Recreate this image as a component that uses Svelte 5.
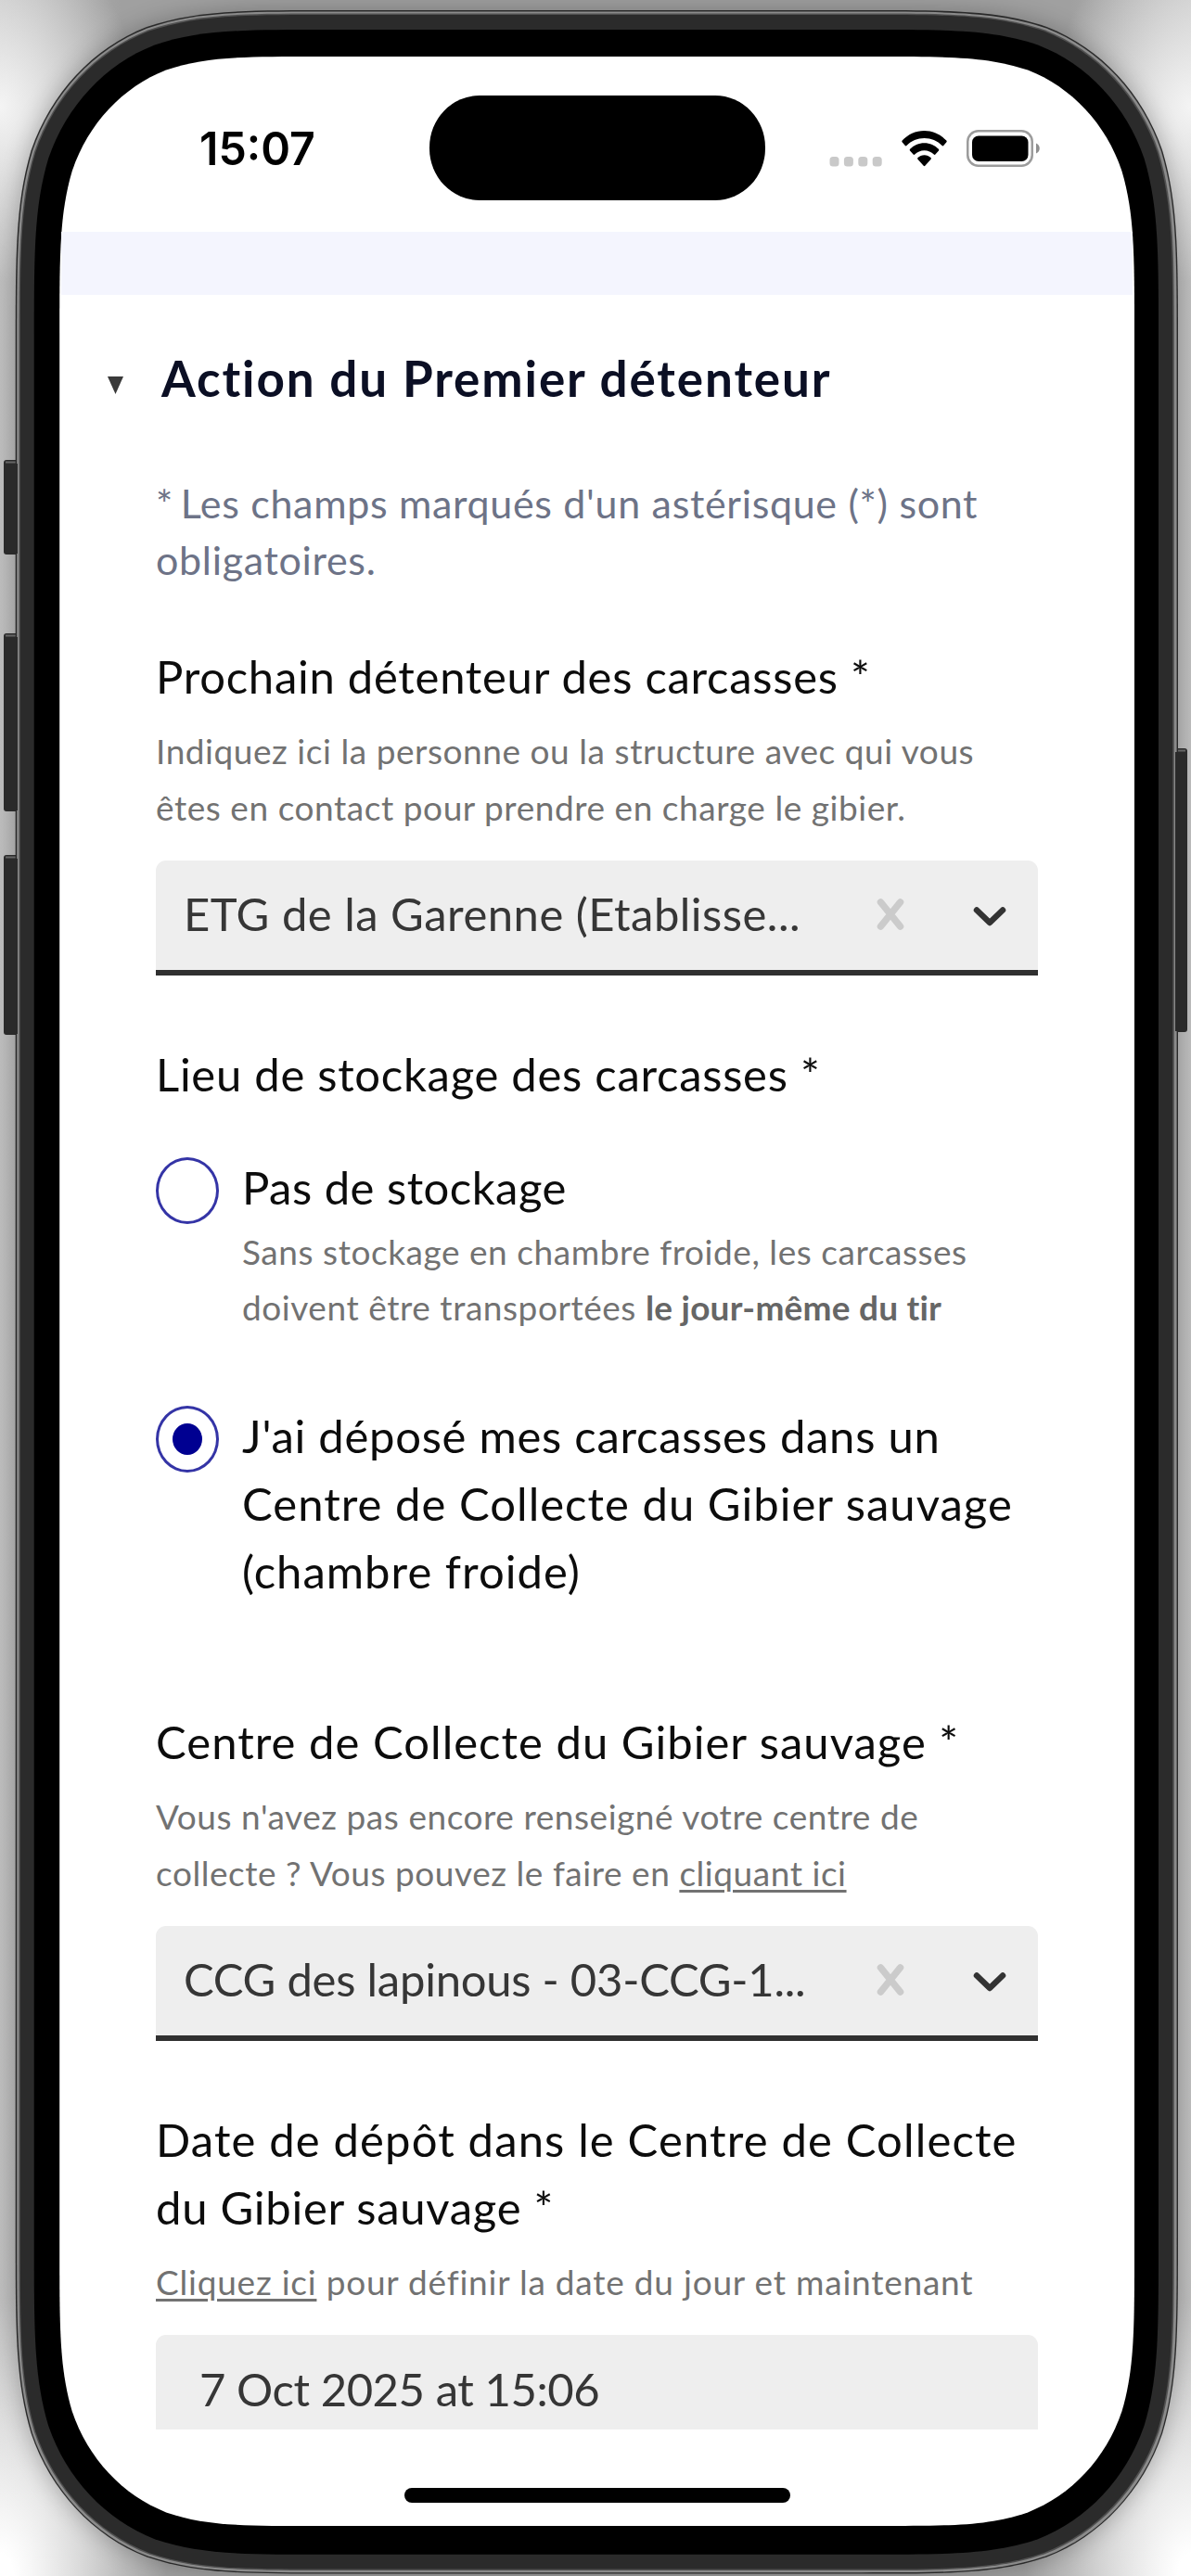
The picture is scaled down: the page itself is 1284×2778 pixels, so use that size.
<script>
  // Continuous-curvature rounded rectangle, used for each ring of the device.
  function squircle(x0, y0, x1, y1, rx, ry) {
    const corners = [
      [x0, y0, 1, 1, false],
      [x1, y0, -1, 1, true],
      [x1, y1, -1, -1, false],
      [x0, y1, 1, -1, true]
    ];
    const curve = [
      [0, 1.52866], [0, 1.08849], [0, 0.86841], [0.07491, 0.63149],
      [0.16906, 0.37282], [0.37282, 0.16906], [0.63149, 0.07491],
      [0.86841, 0], [1.08849, 0], [1.52866, 0]
    ];
    let d = '';
    corners.forEach(([cx, cy, sx, sy, flip], i) => {
      const pts = (flip ? [...curve].reverse() : curve).map(
        ([a, b]) => `${(cx + sx * a * rx).toFixed(2)} ${(cy + sy * b * ry).toFixed(2)}`
      );
      d += `${i ? 'L' : 'M'}${pts[0]}`;
      for (let k = 1; k < 10; k += 3) d += `C${pts[k]} ${pts[k + 1]} ${pts[k + 2]}`;
    });
    return d + 'Z';
  }

  const rings = [
    { fill: '#2a2a2a', d: squircle(16.7, 11, 1270, 2775.6, 224, 240) },
    { fill: '#8b8b8b', d: squircle(18.2, 12.6, 1268.6, 2774.2, 222.5, 238) },
    { fill: '#505050', d: squircle(20.5, 14.6, 1265.8, 2772, 221, 236) },
    { fill: '#2b2b2b', d: squircle(21.8, 16, 1264.2, 2770.6, 220, 235) },
    { fill: '#000', d: squircle(36.7, 32, 1249, 2754.8, 206, 220) },
    { fill: '#fff', d: squircle(64.2, 61, 1223, 2724, 182, 195) }
  ];

  const buttons = [
    { x: 4, y: 496, h: 102 },
    { x: 4, y: 683, h: 192 },
    { x: 4, y: 922, h: 194 },
    { x: 1264, y: 807, h: 306 }
  ];
</script>

{#snippet select(value, cls)}
  <div class="control">
    <span class="value {cls}">{value}</span>
    <svg class="clear" viewBox="0 0 30 36"><path d="M4.500 5L25.500 31M25.500 5L4.500 31" /></svg>
    <svg class="chevron" viewBox="0 0 36 24"><path d="M4 4.500L18 18L32 4.500" /></svg>
  </div>
{/snippet}

<div class="stage">
  <svg class="device" viewBox="0 0 1284 2778">
    <defs>
      <filter id="soft" x="-10%" y="-10%" width="120%" height="120%"><feGaussianBlur stdDeviation="13" /></filter>
    </defs>
    <path d={rings[0].d} fill="#000" opacity=".26" filter="url(#soft)" />
    {#each buttons as b}
      <rect x={b.x} y={b.y} width="16" height={b.h} rx="3" fill="#2a2a2a" />
      <rect x={b.x + 2} y={b.y + 1.5} width="12" height="2" fill="#666" />
    {/each}
    {#each rings as r}<path d={r.d} fill={r.fill} />{/each}
    {#each buttons as b}
      <rect x={b.x < 100 ? 10 : 1267} y={b.y + 4} width="9" height={b.h - 5} fill="#2a2a2a" />
    {/each}
  </svg>

  <main class="screen">
    <header class="status">
      <div class="time"><span>15:07</span></div>
      <div class="island"></div>
      <div class="icons">
        <svg class="dots" viewBox="0 0 56 40">
          <rect x="0" y="29" width="10" height="10.500" rx="3.500" />
          <rect x="15.400" y="29" width="10" height="10.500" rx="3.500" />
          <rect x="30.800" y="29" width="10" height="10.500" rx="3.500" />
          <rect x="46.200" y="29" width="10" height="10.500" rx="3.500" />
        </svg>
        <svg class="wifi" viewBox="0 0 49 40">
          <path d="M24.500 1C33.800 1 42.300 5 48.300 11.600C48.800 12.100 48.800 12.800 48.400 13.300L45.200 17C44.800 17.500 44.100 17.500 43.600 17C38.600 11.900 31.900 9 24.500 9S10.400 11.900 5.400 17C4.900 17.500 4.200 17.500 3.800 17L.6 13.300C.2 12.800 .2 12.100 .7 11.600C6.700 5 15.200 1 24.500 1Z" />
          <path d="M24.500 14.200C30.500 14.200 36 16.700 39.900 20.800C40.400 21.300 40.400 22 40 22.500L36.400 26.500C36 27 35.300 27 34.800 26.500C32.100 23.800 28.500 22.200 24.500 22.200S16.900 23.800 14.200 26.500C13.700 27 13 27 12.600 26.500L9 22.500C8.600 22 8.600 21.300 9.100 20.800C13 16.700 18.500 14.200 24.500 14.200Z" />
          <path d="M24.500 27.200C27.200 27.200 29.700 28.300 31.500 30.100C32 30.600 32 31.200 31.600 31.700L25.300 38.800C24.800 39.300 24.200 39.300 23.700 38.800L17.400 31.700C17 31.200 17 30.600 17.500 30.100C19.300 28.300 21.800 27.200 24.500 27.200Z" />
        </svg>
        <svg class="battery" viewBox="0 0 80 40">
          <rect x="1.250" y="1.250" width="69.500" height="37.500" rx="11.500" fill="none" stroke="#9c9c9c" stroke-width="2.500" />
          <rect x="6" y="6.500" width="60.500" height="27.500" rx="7" />
          <path d="M75 14.500C80 16.500 80 23.500 75 25.500Z" fill="#8f8f8f" />
        </svg>
      </div>
    </header>

    <div class="band"></div>

    <section class="form">
      <h2><svg class="marker" viewBox="0 0 17 19"><path d="M0 0H17L8.500 19Z" /></svg><span>Action du Premier détenteur</span></h2>

      <p class="note"><span class="star">*</span> Les champs marqués d'un astérisque (*) sont<br />obligatoires.</p>

      <div class="field next">
        <div class="label">Prochain détenteur des carcasses *</div>
        <p class="hint">Indiquez ici la personne ou la structure avec qui vous<br />êtes en contact pour prendre en charge le gibier.</p>
        {@render select('ETG de la Garenne (Etablisse...', 'snug')}
      </div>

      <div class="storage">
        <div class="label">Lieu de stockage des carcasses *</div>
        <div class="option">
          <span class="radio"></span>
          <div>
            <div class="label snug">Pas de stockage</div>
            <p class="hint">Sans stockage en chambre froide, les carcasses<br />doivent être transportées <b>le jour-même du tir</b></p>
          </div>
        </div>
        <div class="option">
          <span class="radio checked"></span>
          <div class="label">J'ai déposé mes carcasses dans un<br /><span class="wide">Centre de Collecte du Gibier sauvage<br />(chambre froide)</span></div>
        </div>
      </div>

      <div class="field centre">
        <div class="label wide">Centre de Collecte du Gibier sauvage *</div>
        <p class="hint">Vous n'avez pas encore renseigné votre centre de<br />collecte ? Vous pouvez le faire en <u>cliquant ici</u></p>
        {@render select('CCG des lapinous - 03-CCG-1...', 'code')}
      </div>

      <div class="field date">
        <div class="label"><span class="wider">Date de dépôt dans le Centre de Collecte</span><br />du Gibier sauvage *</div>
        <p class="hint loose"><u>Cliquez ici</u> pour définir la date du jour et maintenant</p>
        <div class="control input"><span class="value flat">7 Oct 2025 at 15:06</span></div>
      </div>
    </section>

    <div class="home"></div>
  </main>
</div>

<style>
  :global(body) { margin: 0; }
  .stage {
    position: relative;
    box-sizing: border-box;
    width: 1284px;
    height: 2778px;
    padding: 61px 61px 54px 64px;
    overflow: hidden;
    font-family: Lato, "Open Sans", sans-serif;
    background:
      radial-gradient(ellipse 150px 190px at 0 115px, #f4f4f4, #f4f4f400),
      radial-gradient(ellipse 150px 190px at 1284px 115px, #f4f4f4, #f4f4f400),
      radial-gradient(ellipse 180px 300px at 0 2778px, #fff 8%, #fff0),
      radial-gradient(ellipse 180px 300px at 1284px 2778px, #fff 8%, #fff0),
      linear-gradient(90deg, #c0c0c0, #a0a0a0 130px, #a0a0a0 1154px, #c0c0c0);
  }
  .device { position: absolute; left: 0; top: 0; width: 1284px; height: 2778px; }
  .screen { position: relative; display: flex; flex-direction: column; height: 2663px; }

  .status {
    display: grid;
    grid-template-columns: 399px 362px 1fr;
    align-items: center;
    box-sizing: border-box;
    height: 189px;
    padding-top: 8px;
  }
  .time { padding-left: 151px; font: 600 50px/60px Inter, sans-serif; color: #000; }
  .time span { display: inline-block; transform: scaleX(.965); transform-origin: 0 50%; }
  .island { height: 113px; border-radius: 54px / 56px; background: #000; }
  .icons { display: flex; gap: 21px; padding-left: 69px; }
  .icons svg { height: 40px; }
  .dots { width: 57px; fill: #c9c9c9; }
  .wifi { width: 49px; }
  .battery { width: 80px; }

  .band { height: 68px; margin: 0 2px; background: #f4f5fe; }

  .form { padding: 54px 104px 0; white-space: nowrap; }
  h2 {
    display: flex;
    align-items: center;
    gap: 41px;
    height: 72px;
    margin: 0 0 68px -52px;
    font-size: 53px;
    font-weight: 700;
    line-height: 72px;
    letter-spacing: 1.9px;
    color: #0b0f24;
  }
  .marker { width: 17px; height: 19px; margin-top: 14px; fill: #3a3a3a; }
  p { margin: 0; }
  .note { font-size: 43px; line-height: 61px; letter-spacing: .68px; color: #6d7387; }
  .star { margin-right: -4px; }
  .label { font-size: 49px; line-height: 73px; letter-spacing: .72px; color: #0c0c0c; }
  .snug { letter-spacing: .48px; }
  .wide { letter-spacing: 1.02px; }
  .wider { letter-spacing: 1.14px; }
  .flat { letter-spacing: -.45px; }
  .code { letter-spacing: -.25px; }
  .hint { font-size: 37px; line-height: 60.5px; letter-spacing: .55px; color: #727272; }
  .loose { letter-spacing: .78px; }
  .hint b { font-weight: 700; letter-spacing: .22px; color: #666; }
  .hint u { text-decoration-thickness: 2.5px; text-underline-offset: 4px; }
  .field .hint { margin-top: 14px; }

  .control {
    display: flex;
    align-items: center;
    box-sizing: border-box;
    height: 124px;
    margin-top: 27px;
    padding: 0 34px 3px 30px;
    border-bottom: 6px solid #303030;
    border-radius: 11px 11px 0 0;
    background: #eee;
  }
  .value { flex: 1; font-size: 49px; line-height: 73px; color: #363636; }
  .clear { width: 30px; height: 36px; margin-right: 74px; fill: none; stroke: #cbcbcb; stroke-width: 7.5; stroke-linecap: round; }
  .chevron { width: 36px; height: 24px; margin-top: 6px; fill: none; stroke: #333; stroke-width: 6.5; stroke-linecap: round; stroke-linejoin: round; }
  .input { height: 102px; padding: 14px 0 0 47px; border-bottom: 0; }

  .next { margin-top: 59px; }
  .storage { margin-top: 70px; }
  .option { display: flex; align-items: flex-start; gap: 25px; margin-top: 49px; }
  .option + .option { margin-top: 71.5px; }
  .option .hint { margin-top: 2.5px; }
  .radio {
    display: grid;
    place-items: center;
    box-sizing: border-box;
    flex: none;
    width: 68px;
    height: 72px;
    margin-top: 4px;
    border: 3px solid #3434a6;
    border-radius: 50%;
  }
  .checked::before { content: ""; width: 32px; height: 34px; border-radius: 50%; background: #000091; }
  .centre { margin-top: 111px; }
  .date { margin-top: 69.5px; }

  .home { width: 416px; height: 16px; margin: auto auto 25px; border-radius: 8px; background: #000; }
</style>
